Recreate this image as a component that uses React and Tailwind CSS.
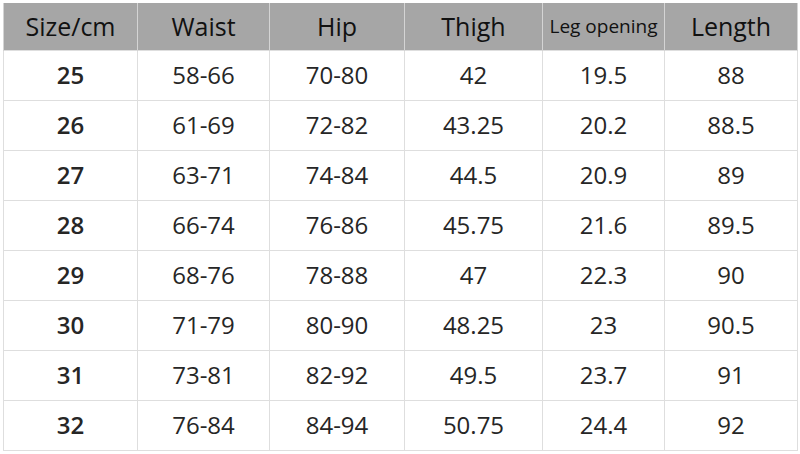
const headers = ['Size/cm', 'Waist', 'Hip', 'Thigh', 'Leg opening', 'Length'];

const rows = [
  ['25', '58-66', '70-80', '42', '19.5', '88'],
  ['26', '61-69', '72-82', '43.25', '20.2', '88.5'],
  ['27', '63-71', '74-84', '44.5', '20.9', '89'],
  ['28', '66-74', '76-86', '45.75', '21.6', '89.5'],
  ['29', '68-76', '78-88', '47', '22.3', '90'],
  ['30', '71-79', '80-90', '48.25', '23', '90.5'],
  ['31', '73-81', '82-92', '49.5', '23.7', '91'],
  ['32', '76-84', '84-94', '50.75', '24.4', '92'],
];

const widths = ['w-[134px]', 'w-[132px]', 'w-[135px]', 'w-[138px]', 'w-[122px]', 'w-[133px]'];

export default function App() {
  return (
    <div className="h-[454px] w-[800px] bg-white pl-[3px] pt-[3px] font-['Open_Sans','Noto_Sans',sans-serif]">
      <table className="w-[795px] table-fixed border-collapse">
        <thead>
          <tr className="h-[47px] bg-[#a6a6a6]">
            {headers.map((h, i) => (
              <th
                key={h}
                className={`${widths[i]} border-x border-[#d4d4d4] p-0 text-center font-normal text-[#111] ${
                  i === 4 ? 'text-[19px]' : 'text-[25px]'
                }`}
              >
                {h}
              </th>
            ))}
          </tr>
        </thead>
        <tbody>
          {rows.map((r) => (
            <tr key={r[0]} className="h-[50px]">
              {r.map((c, i) => (
                <td
                  key={i}
                  className={`border border-[#dedede] p-0 text-center text-[24px] text-[#262626] ${
                    i === 0 ? 'font-semibold' : ''
                  }`}
                >
                  {c}
                </td>
              ))}
            </tr>
          ))}
        </tbody>
      </table>
    </div>
  );
}
